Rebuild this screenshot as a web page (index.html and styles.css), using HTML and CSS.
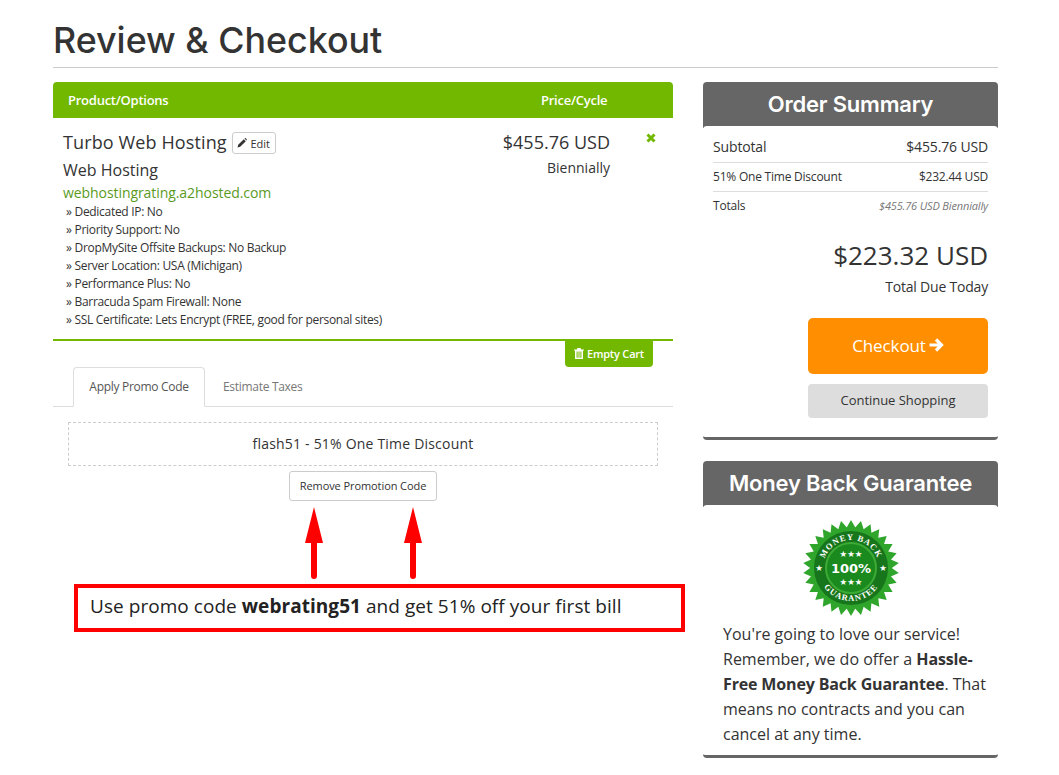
FILE: index.html
```html
<!DOCTYPE html>
<html lang="en">
<head>
    <meta charset="UTF-8">
    <meta name="viewport" content="width=device-width, initial-scale=1.0">
    <title>Review &amp; Checkout</title>
    <link rel="stylesheet" href="styles.css">
</head>
<body>
    <div class="container">
        <h1>Review &amp; Checkout</h1>
        <div class="columns">
            <div class="cart">
                <div class="cart-head">
                    <span class="head-product">Product/Options</span>
                    <span class="head-price">Price/Cycle</span>
                </div>
                <div class="cart-item">
                    <div class="item-info">
                        <div class="item-title">
                            <span>Turbo Web Hosting</span>
                            <a class="edit-btn" href="#">
                                <svg class="icon-edit" viewBox="0 0 10 10"><path d="M0.5 9.5 L1.2 6.8 L6.8 1.2 L8.8 3.2 L3.2 8.8 Z M7.5 0.5 L8 0 Q8.4 -0.1 8.8 0.3 L9.7 1.2 Q10 1.6 9.8 2 L9.4 2.4 Z"/></svg>
                                Edit
                            </a>
                        </div>
                        <div class="item-group">Web Hosting</div>
                        <div class="item-domain">webhostingrating.a2hosted.com</div>
                        <ul class="item-options">
                            <li>Dedicated IP: No</li>
                            <li>Priority Support: No</li>
                            <li>DropMySite Offsite Backups: No Backup</li>
                            <li>Server Location: USA (Michigan)</li>
                            <li>Performance Plus: No</li>
                            <li>Barracuda Spam Firewall: None</li>
                            <li>SSL Certificate: Lets Encrypt (FREE, good for personal sites)</li>
                        </ul>
                    </div>
                    <div class="item-price">
                        <div class="price-amount">$455.76 USD</div>
                        <div class="price-cycle">Biennially</div>
                    </div>
                    <a class="item-remove" href="#">
                        <svg viewBox="0 0 10 10"><path d="M1.5 1.5 L8.5 8.5 M8.5 1.5 L1.5 8.5"/></svg>
                    </a>
                </div>
                <div class="cart-actions">
                    <a class="empty-btn" href="#">
                        <svg class="icon-trash" viewBox="0 0 10 11"><path d="M3.4 0 H6.6 L7.2 1.5 H10 V2.6 H9 V11 H1 V2.6 H0 V1.5 H2.8 Z M2.6 3.6 V9.8 H3.6 V3.6 Z M4.5 3.6 V9.8 H5.5 V3.6 Z M6.4 3.6 V9.8 H7.4 V3.6 Z" fill-rule="evenodd"/></svg>
                        Empty Cart
                    </a>
                </div>
                <div class="tabs">
                    <a class="tab active" href="#">Apply Promo Code</a>
                    <a class="tab" href="#">Estimate Taxes</a>
                </div>
                <div class="promo-box">flash51 - 51% One Time Discount</div>
                <div class="promo-remove">
                    <a class="remove-btn" href="#">Remove Promotion Code</a>
                </div>
                <div class="note-arrows">
                    <svg class="arrow" viewBox="0 0 18 72"><path d="M9 0 L18 36 H12 V69 Q12 72 9 72 Q6 72 6 69 V36 H0 Z"/></svg>
                    <svg class="arrow" viewBox="0 0 18 72"><path d="M9 0 L18 36 H12 V69 Q12 72 9 72 Q6 72 6 69 V36 H0 Z"/></svg>
                </div>
                <div class="note-box">Use promo code <b>webrating51</b> and get 51% off your first bill</div>
            </div>

            <div class="sidebar">
                <div class="panel">
                    <h2 class="panel-head">Order Summary</h2>
                    <div class="panel-body summary">
                        <div class="sum-row first"><span>Subtotal</span><span>$455.76 USD</span></div>
                        <div class="sum-row"><span>51% One Time Discount</span><span>$232.44 USD</span></div>
                        <div class="sum-row last"><span>Totals</span><em>$455.76 USD Biennially</em></div>
                        <div class="total-due">$223.32 USD</div>
                        <div class="total-label">Total Due Today</div>
                        <a class="checkout-btn" href="#">Checkout
                            <svg class="icon-arrow" viewBox="0 0 16 16"><path d="M1.5 8 H13 M8 2.5 L13.5 8 L8 13.5"/></svg>
                        </a>
                        <a class="continue-btn" href="#">Continue Shopping</a>
                    </div>
                </div>
                <div class="panel">
                    <h2 class="panel-head">Money Back Guarantee</h2>
                    <div class="panel-body guarantee">
                        <svg class="badge" viewBox="-48 -48 96 96">
                            <defs>
                                <polygon id="tri" points="0,-48 41.57,24 -41.57,24"/>
                                <path id="arc-top" d="M-28 0 A28 28 0 0 1 28 0"/>
                                <path id="arc-bottom" d="M-33 0 A33 33 0 0 0 33 0"/>
                            </defs>
                            <g class="badge-burst">
                                <use href="#tri"/>
                                <use href="#tri" transform="rotate(12)"/>
                                <use href="#tri" transform="rotate(24)"/>
                                <use href="#tri" transform="rotate(36)"/>
                                <use href="#tri" transform="rotate(48)"/>
                                <use href="#tri" transform="rotate(60)"/>
                                <use href="#tri" transform="rotate(72)"/>
                                <use href="#tri" transform="rotate(84)"/>
                                <use href="#tri" transform="rotate(96)"/>
                                <use href="#tri" transform="rotate(108)"/>
                            </g>
                            <circle class="badge-dark" r="37"/>
                            <circle class="badge-ring" r="25"/>
                            <text class="badge-arc"><textPath href="#arc-top" startOffset="50%">MONEY BACK</textPath></text>
                            <text class="badge-arc"><textPath href="#arc-bottom" startOffset="50%">GUARANTEE</textPath></text>
                            <text class="badge-num" y="5">100%</text>
                            <text class="badge-stars" y="-11">★★★</text>
                            <text class="badge-stars" y="17">★★★</text>
                            <text class="badge-stars" x="-32" y="3">★</text>
                            <text class="badge-stars" x="32" y="3">★</text>
                        </svg>
                        <p>You're going to love our service! Remember, we do offer a <b>Hassle-Free Money Back Guarantee</b>. That means no contracts and you can cancel at any time.</p>
                    </div>
                </div>
            </div>
        </div>
    </div>
</body>
</html>
```

FILE: styles.css
```css
* {
    box-sizing: border-box;
}
body {
    font-family: 'Open Sans', sans-serif;
    margin: 0;
    padding: 0;
    background: #fff;
    color: #333;
}
a {
    text-decoration: none;
    color: inherit;
}
.container {
    width: 945px;
    margin-left: 53px;
}
h1 {
    font-family: 'Inter', sans-serif;
    font-size: 35.8px;
    font-weight: 500;
    line-height: 42px;
    height: 68px;
    margin: 0 0 14px;
    padding-top: 19px;
    color: #333;
    border-bottom: 1px solid #ccc;
}
.columns {
    display: flex;
    gap: 30px;
    align-items: flex-start;
}
.cart {
    width: 620px;
}
.sidebar {
    width: 295px;
}

/* cart table */
.cart-head {
    display: flex;
    height: 36px;
    align-items: center;
    padding-left: 15px;
    background: #72b800;
    border-radius: 4px 4px 0 0;
    color: #fff;
    font-size: 13px;
    font-weight: 600;
    letter-spacing: -0.25px;
}
.head-product {
    width: 473px;
}
.cart-item {
    display: flex;
    height: 223px;
    padding: 12px 0 0 10px;
    border-bottom: 2px solid #72b800;
}
.item-info {
    width: 385px;
}
.item-title {
    display: flex;
    align-items: center;
    gap: 5px;
    height: 24px;
    font-size: 18px;
    letter-spacing: 0.12px;
}
.edit-btn {
    display: flex;
    align-items: center;
    justify-content: center;
    gap: 3px;
    width: 44px;
    height: 22px;
    font-size: 11px;
    letter-spacing: 0;
    border: 1px solid #ccc;
    border-radius: 3px;
    margin-top: 2px;
}
.icon-edit {
    width: 10px;
    height: 10px;
    fill: #333;
}
.item-group {
    font-size: 16px;
    line-height: 22px;
    margin-top: 5px;
}
.item-domain {
    font-size: 14px;
    line-height: 20px;
    margin-top: 2px;
    color: #5b9a1f;
    letter-spacing: -0.07px;
}
.item-options {
    list-style: none;
    margin: 0;
    padding: 0 0 0 3px;
    font-size: 12px;
    line-height: 18px;
    letter-spacing: -0.3px;
}
.item-options li::before {
    content: "» ";
}
.item-price {
    width: 162px;
    text-align: right;
}
.price-amount {
    font-size: 18px;
    line-height: 24px;
}
.price-cycle {
    font-size: 14px;
    line-height: 20px;
    margin-top: 4px;
}
.item-remove {
    margin: 3px 0 0 36px;
}
.item-remove svg {
    display: block;
    width: 10px;
    height: 10px;
    fill: none;
    stroke: #72b800;
    stroke-width: 3;
}
.cart-actions {
    display: flex;
    justify-content: flex-end;
    padding-right: 20px;
}
.empty-btn {
    display: flex;
    align-items: center;
    justify-content: center;
    gap: 3px;
    width: 88px;
    height: 26px;
    padding-bottom: 2px;
    background: #72b800;
    color: #fff;
    font-size: 11px;
    font-weight: 600;
    letter-spacing: -0.2px;
    border-radius: 0 0 4px 4px;
}
.icon-trash {
    width: 10px;
    height: 11px;
    fill: #fff;
}

/* promo tabs */
.tabs {
    display: flex;
    height: 40px;
    padding-left: 20px;
    border-bottom: 1px solid #ddd;
    font-size: 12px;
    letter-spacing: -0.3px;
}
.tab {
    display: flex;
    align-items: center;
    height: 40px;
    padding: 0 16px 2px;
    color: #777;
    border: 1px solid transparent;
    border-radius: 4px 4px 0 0;
    margin-right: 1px;
}
.tab.active {
    width: 132px;
    justify-content: center;
    padding: 0 0 2px;
    color: #555;
    background: #fff;
    border-color: #ddd #ddd #fff;
}
.promo-box {
    margin: 15px 15px 0;
    height: 44px;
    line-height: 42px;
    text-align: center;
    font-size: 14px;
    letter-spacing: 0.2px;
    border: 1px dashed #ccc;
}
.promo-remove {
    display: flex;
    justify-content: center;
    margin-top: 5px;
}
.remove-btn {
    display: block;
    width: 148px;
    height: 30px;
    line-height: 28px;
    text-align: center;
    font-size: 11px;
    letter-spacing: -0.08px;
    border: 1px solid #ccc;
    border-radius: 3px;
}
.note-arrows {
    display: flex;
    gap: 81px;
    margin: 6px 0 0 252px;
}
.arrow {
    display: block;
    width: 18px;
    height: 72px;
    fill: #f00;
}
.note-box {
    width: 611px;
    height: 48px;
    margin: 5px 0 0 21px;
    padding-left: 12px;
    line-height: 36px;
    font-size: 19px;
    letter-spacing: 0.05px;
    color: #222;
    border: 4px solid #f00;
}

/* sidebar panels */
.panel {
    margin-bottom: 21px;
}
.panel-head {
    height: 46px;
    margin: 0;
    padding-bottom: 2px;
    line-height: 44px;
    text-align: center;
    font-family: 'Inter', sans-serif;
    font-size: 22px;
    font-weight: 600;
    letter-spacing: -0.2px;
    color: #fff;
    background: #666;
    border-radius: 4px 4px 0 0;
}
.panel-body {
    position: relative;
    margin-top: -2px;
    background: #fff;
    border-bottom: 3px solid #666;
    border-radius: 4px;
}
.summary {
    height: 314px;
    padding: 8px 10px 0;
}
.sum-row {
    display: flex;
    justify-content: space-between;
    align-items: center;
    height: 29px;
    padding-bottom: 1px;
    font-size: 12px;
    letter-spacing: -0.22px;
    border-bottom: 1px solid #ddd;
}
.sum-row.first {
    padding-bottom: 3px;
    font-size: 14px;
    letter-spacing: -0.15px;
}
.sum-row.last {
    padding-bottom: 3px;
    border-bottom: 0;
}
.sum-row em {
    font-size: 11px;
    letter-spacing: -0.15px;
    color: #777;
}
.total-due {
    margin-top: 16px;
    text-align: right;
    font-size: 26px;
    line-height: 36px;
}
.total-label {
    margin-top: 4px;
    text-align: right;
    font-size: 14px;
    letter-spacing: -0.2px;
    line-height: 20px;
}
.checkout-btn {
    display: flex;
    align-items: center;
    justify-content: center;
    gap: 2px;
    width: 180px;
    height: 56px;
    margin: 21px 0 0 auto;
    padding-bottom: 2px;
    color: #fff;
    background: #ff8f00;
    font-size: 17px;
    letter-spacing: -0.1px;
    border-radius: 5px;
}
.icon-arrow {
    width: 16px;
    height: 16px;
    fill: none;
    stroke: #fff;
    stroke-width: 3.2;
}
.continue-btn {
    display: block;
    width: 180px;
    height: 34px;
    line-height: 33px;
    margin: 10px 0 0 auto;
    text-align: center;
    font-size: 13px;
    letter-spacing: -0.05px;
    background: #ddd;
    border-radius: 4px;
}
.guarantee {
    height: 253px;
    padding-top: 15px;
}
.badge {
    display: block;
    width: 96px;
    height: 96px;
    margin: 0 auto;
}
.badge-burst {
    fill: #2fa52c;
}
.badge-dark {
    fill: #17761b;
}
.badge-ring {
    fill: #1a8a1f;
    stroke: #3cab36;
    stroke-width: 2;
}
.badge-arc {
    font-family: 'Liberation Serif', serif;
    font-weight: 700;
    font-size: 8.5px;
    letter-spacing: 1px;
    text-anchor: middle;
    fill: #fff;
}
.badge-num {
    font-family: 'DejaVu Sans', sans-serif;
    font-weight: 700;
    font-size: 13px;
    text-anchor: middle;
    fill: #fff;
}
.badge-stars {
    font-family: 'DejaVu Sans', sans-serif;
    font-size: 8.5px;
    text-anchor: middle;
    fill: #fff;
}
.guarantee p {
    margin: 6px 5px 0 20px;
    font-size: 16px;
    line-height: 25px;
}
.guarantee b {
    letter-spacing: -0.15px;
}
```
